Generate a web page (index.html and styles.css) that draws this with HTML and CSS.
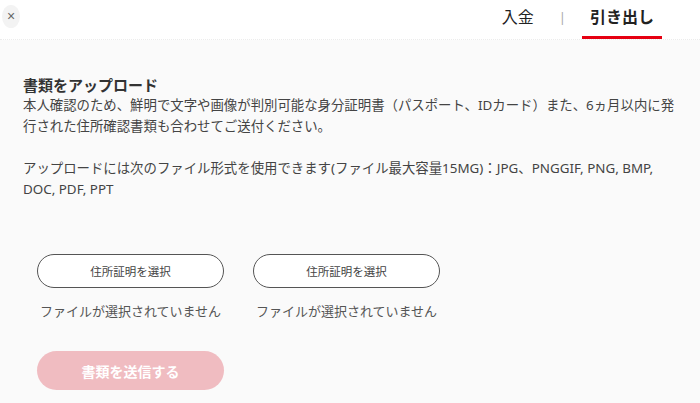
FILE: index.html
```html
<!DOCTYPE html>
<html lang="ja">
<head>
    <meta charset="UTF-8">
    <meta name="viewport" content="width=device-width, initial-scale=1.0">
    <title>書類をアップロード</title>
    <link rel="stylesheet" href="styles.css">
</head>
<body>
    <header class="topbar">
        <button class="close-btn" type="button" title="閉じる">&times;</button>
        <nav class="tabs">
            <a href="#" class="tab">入金</a>
            <span class="tab-sep">|</span>
            <a href="#" class="tab active">引き出し</a>
        </nav>
    </header>
    <main class="content">
        <h2 class="title">書類をアップロード</h2>
        <p class="desc">
            本人確認のため、鮮明で文字や画像が判別可能な身分証明書（パスポート、IDカード）また、6ヵ月以内に発行された住所確認書類も合わせてご送付ください。
            <br><br>
            アップロードには次のファイル形式を使用できます(ファイル最大容量15MG)：JPG、PNGGIF, PNG, BMP, DOC, PDF, PPT
        </p>
        <form class="upload-form">
            <div class="file-row">
                <div class="file-item">
                    <button type="button" class="file-btn">住所証明を選択</button>
                    <span class="file-name">ファイルが選択されていません</span>
                </div>
                <div class="file-item">
                    <button type="button" class="file-btn">住所証明を選択</button>
                    <span class="file-name">ファイルが選択されていません</span>
                </div>
            </div>
            <button type="submit" class="submit-btn" disabled>書類を送信する</button>
        </form>
    </main>
</body>
</html>
```

FILE: styles.css
```css
html, body {
    height: 100%;
}
body {
    margin: 0;
    background-color: #fafafa;
    color: #444;
    font-family: "Noto Sans", "Noto Sans CJK JP", sans-serif;
}
.topbar {
    display: flex;
    justify-content: space-between;
    align-items: flex-start;
    height: 40px;
    background-color: #fff;
    border-bottom: 1px dotted #ececec;
    box-sizing: border-box;
}
.close-btn {
    width: 18px;
    height: 23px;
    margin: 5px 0 0 2px;
    padding: 0;
    border: none;
    border-radius: 50%;
    background-color: #f3f3f3;
    color: #666;
    font-size: 14px;
    line-height: 23px;
    cursor: pointer;
}
.tabs {
    display: flex;
    align-items: flex-start;
    margin-right: 38px;
}
.tab {
    display: block;
    height: 36px;
    padding: 6px 10px 0;
    box-sizing: border-box;
    color: #222;
    font-size: 16px;
    line-height: 22px;
    text-decoration: none;
    white-space: nowrap;
}
.tab.active {
    height: 39px;
    width: 80px;
    padding: 6px 0 0;
    text-align: center;
    font-weight: bold;
    border-bottom: 3px solid #e60012;
}
.tab-sep {
    margin: 0 16px 0 15px;
    padding-top: 6px;
    color: #aaa;
    font-size: 13px;
    line-height: 22px;
}
.content {
    padding: 35px 23px 0;
}
.title {
    margin: 0;
    font-size: 15px;
    line-height: 20px;
    color: #333;
}
.desc {
    margin: 0;
    font-size: 13.4px;
    line-height: 21px;
}
.upload-form {
    padding: 54px 0 0 14px;
}
.file-row {
    display: flex;
    gap: 29px;
}
.file-item {
    display: flex;
    flex-direction: column;
    width: 187px;
}
.file-btn {
    height: 34px;
    border: 1.5px solid #555;
    border-radius: 17px;
    background-color: #fff;
    color: #444;
    font-family: inherit;
    font-size: 11.5px;
    cursor: pointer;
}
.file-name {
    margin-top: 13px;
    text-align: center;
    font-size: 13px;
    line-height: 20px;
    color: #555;
}
.submit-btn {
    display: block;
    width: 187px;
    height: 39px;
    margin-top: 30px;
    border: none;
    border-radius: 20px;
    background-color: #f0bcc1;
    color: #fff;
    font-family: inherit;
    font-size: 14px;
    font-weight: bold;
}
```
